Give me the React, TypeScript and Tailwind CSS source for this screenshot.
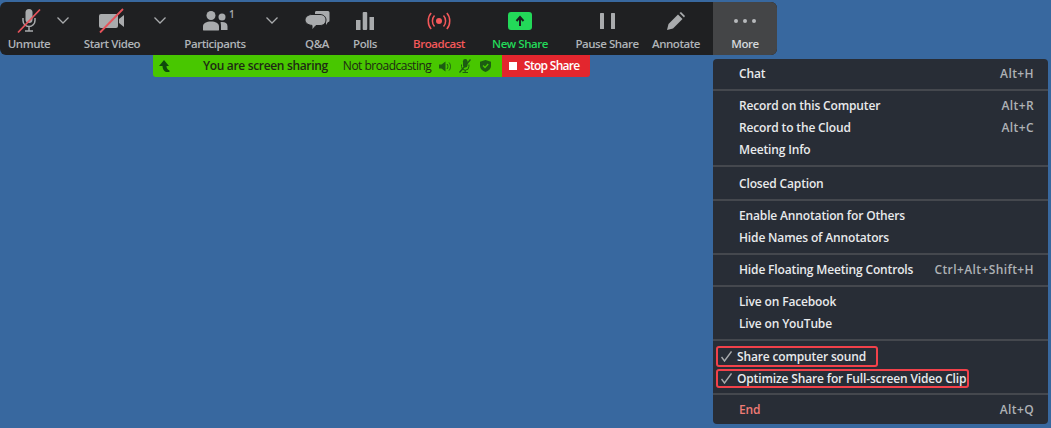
import React from 'react';

const GREY = '#a9abad';

const MicIcon = () => (
  <svg width="26" height="26" viewBox="0 0 26 26" className="overflow-visible">
    <rect x="9.500" y="1" width="7" height="14" rx="3.500" fill={GREY} />
    <path d="M7 10v2.500a6 6 0 0 0 12 0V10M13 18.500v4M9 23h8" fill="none" stroke={GREY} strokeWidth="1.500" />
    <path d="M2 24.500 24 1.500" stroke="#e5535b" strokeWidth="1.800" />
  </svg>
);

const VideoIcon = () => (
  <svg width="26" height="26" viewBox="0 0 26 26" className="overflow-visible">
    <rect x="0" y="6" width="19" height="14" rx="2" fill={GREY} />
    <path d="M20 11l5-4v12l-5-4z" fill={GREY} />
    <path d="M1 24.500 24 1" stroke="#e5535b" strokeWidth="1.800" />
  </svg>
);

const PeopleIcon = () => (
  <svg width="26" height="20" viewBox="0 0 26 20">
    <circle cx="9" cy="4.500" r="4.500" fill={GREY} />
    <circle cx="20" cy="6" r="3.500" fill={GREY} />
    <path d="M1 19v-3.500C1 12 4.500 10.500 9 10.500s8 1.500 8 5V19a1 1 0 0 1-1 .5H2a1 1 0 0 1-1-.5z" fill={GREY} />
    <path d="M18.500 11.200c4-.5 7 .8 7 4V19h-6.500v-4c0-1.500-.2-2.800-.5-3.800z" fill={GREY} />
  </svg>
);

const QaIcon = () => (
  <svg width="25" height="20" viewBox="0 0 25 20">
    <path d="M12 0h11a1.500 1.500 0 0 1 1.500 1.500v8a1.500 1.500 0 0 1-1.500 1.500l-2 3v-5.500H10V1.500A1.500 1.500 0 0 1 12 0z" fill={GREY} />
    <path d="M7 3.500h8c3.500 0 6 2.400 6 5.500s-2.500 5.500-6 5.500h-4l-4 4.500v-4.600C3 14 0 12 0 9s3-5.500 7-5.500z" fill={GREY} stroke="#1f2022" strokeWidth="1" />
  </svg>
);

const PollsIcon = () => (
  <svg width="18" height="18" viewBox="0 0 18 18">
    <rect x="0" y="8" width="4.500" height="10" fill={GREY} />
    <rect x="6.700" y="0" width="4.500" height="18" rx="1" fill={GREY} />
    <rect x="13.500" y="5" width="4.500" height="13" fill={GREY} />
  </svg>
);

const BroadcastIcon = () => (
  <svg width="24" height="18" viewBox="0 0 24 18" fill="none" stroke="#f4585a" strokeWidth="1.500">
    <circle cx="12" cy="9" r="3" fill="#f4585a" stroke="none" />
    <path d="M7.500 3.500c-2.800 3-2.800 8 0 11M16.500 3.500c2.800 3 2.800 8 0 11" />
    <path d="M4.200 1C.3 5 .3 13 4.200 17M19.800 1c3.900 4 3.900 12 0 16" />
  </svg>
);

const NewShareIcon = () => (
  <svg width="24" height="18" viewBox="0 0 24 18">
    <rect width="24" height="18" rx="3" fill="#23d959" />
    <path d="M12 14V6M8.500 9 12 5l3.500 4" fill="none" stroke="#1a1c1e" strokeWidth="2" />
  </svg>
);

const PauseIcon = () => (
  <svg width="15" height="16" viewBox="0 0 15 16">
    <rect x="0" y="0" width="4" height="16" rx="0.500" fill={GREY} />
    <rect x="11" y="0" width="4" height="16" rx="0.500" fill={GREY} />
  </svg>
);

const PencilIcon = () => (
  <svg width="18" height="18" viewBox="0 0 18 18">
    <path d="M0 18l1.500-6L11 2.500l4.500 4.500L6 16.500z" fill={GREY} />
    <path d="M12.500 1 14 0l4 4-1 1.500z" fill={GREY} />
  </svg>
);

const Chevron = () => (
  <div className="w-[22px] h-[24px] flex items-center justify-center shrink-0">
    <svg width="12" height="7" viewBox="0 0 12 7" fill="none" stroke="#a9abad" strokeWidth="1.300">
      <path d="M.5.500 6 6 11.500.500" />
    </svg>
  </div>
);

const ToolButton = ({ label, icon, className, labelClass = 'text-[#b0b4b8]' }: { label: string; icon: React.ReactNode; className: string; labelClass?: string }) => (
  <div className={`flex flex-col items-center shrink-0 ${className}`}>
    <div className="h-[26px] flex items-center justify-center">{icon}</div>
    <span className={`mt-[2px] text-[11.5px] leading-[16px] font-semibold tracking-[-0.45px] whitespace-nowrap ${labelClass}`}>{label}</span>
  </div>
);

const MenuRow = ({ label, shortcut, red }: { label: string; shortcut?: string; red?: boolean }) => (
  <div className="h-[22px] flex items-center justify-between pl-[26px] pr-[14px] text-[12px] font-semibold">
    <span className={`tracking-[-0.15px] ${red ? 'text-[#ee7b75]' : 'text-[#e8eaec]'}`}>{label}</span>
    {shortcut && <span className="tracking-[0.4px] text-[#aeb1b5]">{shortcut}</span>}
  </div>
);

const CheckedRow = ({ label, className, boxClass }: { label: string; className: string; boxClass: string }) => (
  <div className={`flex items-center pl-[3px] ${className}`}>
    <div className={`flex items-center h-full border-2 border-[#f2414a] rounded-[3px] pl-[3px] text-[12px] font-semibold tracking-[-0.15px] text-[#e8eaec] whitespace-nowrap ${boxClass}`}>
      <svg width="11" height="11" viewBox="0 0 11 11" fill="none" stroke="#a9abad" strokeWidth="1.400" className="mr-[5px]">
        <path d="M.5 6 3.500 10 10.500.500" />
      </svg>
      {label}
    </div>
  </div>
);

const Divider = () => (
  <div className="h-[10px] flex items-center">
    <div className="h-[2px] w-full bg-[#45484e]" />
  </div>
);

export default function App() {
  return (
    <div className="relative w-[1051px] h-[428px] overflow-hidden bg-[#38689f] pt-[2px] font-['Open_Sans','Liberation_Sans',sans-serif]">
      {/* floating meeting controls */}
      <div className="flex w-[777px] h-[53px] bg-[#1f2022] rounded-[6px] pt-[6px]">
        <ToolButton label="Unmute" icon={<MicIcon />} className="w-[46px] ml-[6px]" />
        <Chevron />
        <ToolButton label="Start Video" icon={<VideoIcon />} className="w-[72px] ml-[2px]" />
        <div className="ml-[1px]"><Chevron /></div>
        <ToolButton
          label="Participants"
          icon={
            <div className="relative">
              <PeopleIcon />
              <span className="absolute left-[27px] top-[-3px] text-[10px] leading-[12px] text-[#a9abad] font-semibold">1</span>
            </div>
          }
          className="w-[88px]"
        />
        <div className="ml-[2px]"><Chevron /></div>
        <ToolButton label="Q&A" icon={<QaIcon />} className="w-[40px] ml-[14px]" />
        <ToolButton label="Polls" icon={<PollsIcon />} className="w-[40px] ml-[8px]" />
        <ToolButton label="Broadcast" icon={<BroadcastIcon />} className="w-[60px] ml-[24px]" labelClass="text-[#f4585a]" />
        <ToolButton label="New Share" icon={<NewShareIcon />} className="w-[60px] ml-[21px]" labelClass="text-[#23d959]" />
        <ToolButton label="Pause Share" icon={<PauseIcon />} className="w-[64px] ml-[25px]" />
        <ToolButton label="Annotate" icon={<PencilIcon />} className="w-[60px] ml-[7px]" />
        <div className="w-[64px] ml-[7px] -mt-[6px] pt-[6px] h-[53px] bg-[#444547] rounded-r-[6px]">
          <ToolButton
            label="More"
            className="w-full"
            labelClass="text-[#d5d8dc]"
            icon={
              <div className="flex gap-[5px]">
                <div className="w-[4px] h-[4px] rounded-full bg-[#b8babc]" />
                <div className="w-[4px] h-[4px] rounded-full bg-[#b8babc]" />
                <div className="w-[4px] h-[4px] rounded-full bg-[#b8babc]" />
              </div>
            }
          />
        </div>
      </div>

      {/* sharing status bar */}
      <div className="flex ml-[153px] w-[437px] h-[22px] rounded-b-[3px] overflow-hidden text-[12px] whitespace-nowrap">
        <div className="flex items-center w-[349px] bg-[#48c700] text-[#1d2a14] pl-[6px]">
          <svg width="12" height="12" viewBox="0 0 12 12" fill="#0f4a0c">
            <path d="M0 6 5 0l5 6H7.500c0 2 1 3.500 3 4.500v1.500H7C4.500 11 3.500 8.500 3.500 6z" />
          </svg>
          <span className="ml-[32px] font-semibold tracking-[-0.33px]">You are screen sharing</span>
          <span className="ml-[15px] tracking-[-0.5px]">Not broadcasting</span>
          <svg width="13" height="11" viewBox="0 0 13 11" fill="#1c5c12" className="ml-[8px]">
            <path d="M0 3.500h2.500L6.500.500v10l-4-3H0z" />
            <path d="M8 3c1.200 1.300 1.200 3.700 0 5M10 1.500c2 2.200 2 5.800 0 8" fill="none" stroke="#1c5c12" />
          </svg>
          <svg width="12" height="14" viewBox="0 0 12 14" fill="#1c5c12" className="ml-[7px]">
            <rect x="4" y="0" width="4.500" height="8.500" rx="2.200" />
            <path d="M2.500 5.500v2a3.700 3.700 0 0 0 7.400 0v-2M6.200 11v2M3.500 13.500h5.500" fill="none" stroke="#1c5c12" />
            <path d="M.5 13.500 11.500.500" stroke="#1c5c12" strokeWidth="1.300" />
          </svg>
          <svg width="11" height="12" viewBox="0 0 11 12" fill="#1c5c12" className="ml-[9px]">
            <path d="M5.500 0 11 1.800V6c0 3-2.500 5-5.500 6C2.500 11 0 9 0 6V1.800z" />
            <path d="M3 5.500 5 7.500 8.200 4" fill="none" stroke="#48c700" strokeWidth="1.300" />
          </svg>
        </div>
        <div className="flex items-center w-[88px] bg-[#e3262e] text-white font-semibold tracking-[-0.7px] pl-[7px]">
          <div className="w-[8px] h-[8px] bg-white mr-[7px]" />
          Stop Share
        </div>
      </div>

      {/* More dropdown */}
      <div className="absolute left-[713px] top-[59px] w-[335px] bg-[#282d36] rounded-[4px] pt-[4px] pb-[3px]">
        <MenuRow label="Chat" shortcut="Alt+H" />
        <Divider />
        <MenuRow label="Record on this Computer" shortcut="Alt+R" />
        <MenuRow label="Record to the Cloud" shortcut="Alt+C" />
        <MenuRow label="Meeting Info" />
        <Divider />
        <div className="pt-[2px]"><MenuRow label="Closed Caption" /></div>
        <Divider />
        <MenuRow label="Enable Annotation for Others" />
        <MenuRow label="Hide Names of Annotators" />
        <Divider />
        <MenuRow label="Hide Floating Meeting Controls" shortcut="Ctrl+Alt+Shift+H" />
        <Divider />
        <MenuRow label="Live on Facebook" />
        <MenuRow label="Live on YouTube" />
        <Divider />
        <CheckedRow label="Share computer sound" className="h-[21px] mt-[1px]" boxClass="pr-[10px]" />
        <CheckedRow label="Optimize Share for Full-screen Video Clip" className="h-[19px] mt-[2px] mb-[1px]" boxClass="pr-[1px]" />
        <Divider />
        <MenuRow label="End" shortcut="Alt+Q" red />
      </div>
    </div>
  );
}
